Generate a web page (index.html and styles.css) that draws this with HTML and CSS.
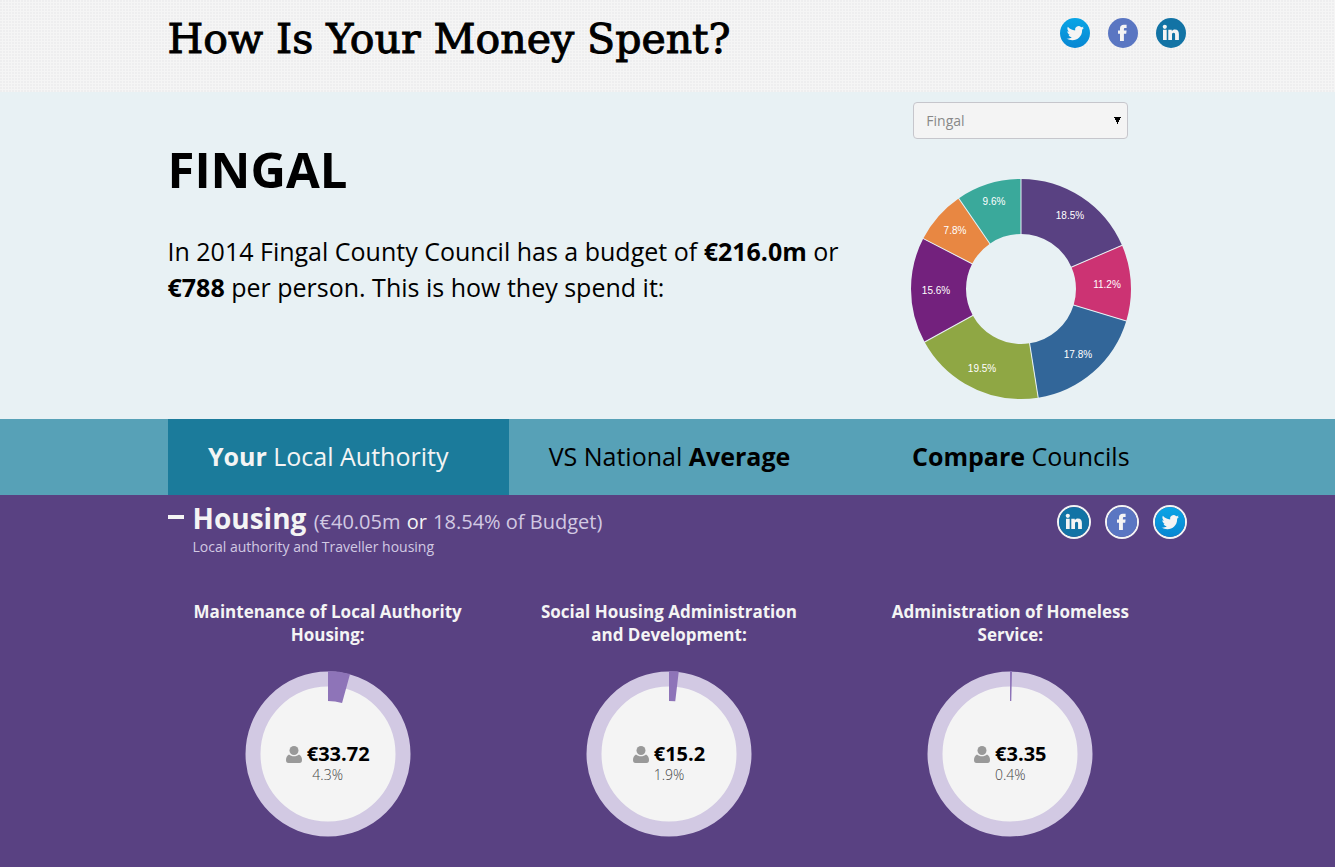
FILE: index.html
```html
<!DOCTYPE html>
<html lang="en">
<head>
<meta charset="utf-8">
<title>How Is Your Money Spent?</title>
<link rel="stylesheet" href="styles.css">
</head>
<body>
<svg class="defs" aria-hidden="true">
  <defs>
    <linearGradient id="tw" x1="0" y1="0" x2="0" y2="1"><stop offset="0" stop-color="#0aa5e6"/><stop offset="1" stop-color="#0786d2"/></linearGradient>
    <symbol id="twitter" viewBox="0 0 30 30">
      <circle cx="15" cy="15" r="15" fill="url(#tw)"/>
      <path fill="#f4f4f4" transform="translate(15 15) scale(1.080) translate(-15.200 -15)" d="M23.5 10.2c-.6.3-1.200.4-1.900.5.7-.4 1.200-1 1.400-1.800-.6.4-1.300.6-2.100.8a3.300 3.300 0 0 0-5.600 3c-2.700-.1-5.100-1.400-6.700-3.400-.9 1.500-.4 3.400 1 4.400-.5 0-1-.2-1.500-.4 0 1.600 1.100 2.900 2.600 3.200-.5.1-1 .2-1.500.1.4 1.300 1.600 2.200 3 2.300-1.400 1.100-3 1.500-4.800 1.300 6.500 4 14.400 0 14.400-7.700v-.6c.7-.5 1.200-1 1.700-1.700z"/>
    </symbol>
    <symbol id="facebook" viewBox="0 0 30 30">
      <circle cx="15" cy="15" r="15" fill="#5a76c2"/>
      <path fill="#f4f4f4" d="M12 23v-7.300H10v-3.200h2v-2C12 8 13.500 6.800 15.800 6.800H18.600v3.200h-1.500c-.9 0-1.200.4-1.200 1.200v1.300h2.700l-.4 3.200h-2.300V23z"/>
    </symbol>
    <symbol id="linkedin" viewBox="0 0 30 30">
      <circle cx="15" cy="15" r="15" fill="#1273a5"/>
      <path fill="#f4f4f4" d="M7 11.800h3.700V22H7zM12.300 11.800h3.500v1.400c.6-1 1.700-1.700 3.100-1.700 2.900 0 4 1.700 4 4.700V22h-3.800v-5c0-1.300-.3-2.200-1.500-2.200s-1.600.9-1.600 2.200v5h-3.700z"/>
      <circle cx="8.800" cy="8.800" r="2.100" fill="#f4f4f4"/>
    </symbol>
    <symbol id="person" viewBox="0 0 16 17">
      <path fill="#999" d="M3 8.500c1.300 1.200 3 1.800 5 1.800s3.700-.6 5-1.800c2 .9 3 3 3 5.500 0 2-.8 3-2.500 3h-11C.8 17 0 16 0 14c0-2.500 1-4.600 3-5.500z"/>
      <circle cx="8" cy="4.500" r="4.500" fill="#999"/>
    </symbol>
  </defs>
</svg>

<header class="header">
  <div class="container header-row">
    <h1 class="site-title">How Is Your Money Spent?</h1>
    <nav class="social" aria-label="Share">
      <a href="#" aria-label="Twitter"><svg class="icon"><use href="#twitter"/></svg></a>
      <a href="#" aria-label="Facebook"><svg class="icon"><use href="#facebook"/></svg></a>
      <a href="#" aria-label="LinkedIn"><svg class="icon"><use href="#linkedin"/></svg></a>
    </nav>
  </div>
</header>

<section class="hero">
  <div class="container columns">
    <div class="intro">
      <h2 class="council">FINGAL</h2>
      <p class="lead">In 2014 Fingal County Council has a budget of <b>€216.0m</b> or <b>€788</b> per person. This is how they spend it:</p>
    </div>
    <div class="overview">
      <select class="picker" aria-label="Council"><option>Fingal</option></select>
      <svg class="pie" viewBox="-110 -110 220 220" role="img" aria-label="Budget by category">
        <g class="slices" transform="rotate(-90)">
          <circle r="82.5" pathLength="100" stroke="#594182" stroke-dasharray="18.5 81.5"/>
          <circle r="82.5" pathLength="100" stroke="#cc3373" stroke-dasharray="11.2 88.8" stroke-dashoffset="-18.5"/>
          <circle r="82.5" pathLength="100" stroke="#326699" stroke-dasharray="17.8 82.2" stroke-dashoffset="-29.7"/>
          <circle r="82.5" pathLength="100" stroke="#8fa744" stroke-dasharray="19.5 80.5" stroke-dashoffset="-47.5"/>
          <circle r="82.5" pathLength="100" stroke="#73217d" stroke-dasharray="15.6 84.4" stroke-dashoffset="-67"/>
          <circle r="82.5" pathLength="100" stroke="#e88742" stroke-dasharray="7.8 92.2" stroke-dashoffset="-82.6"/>
          <circle r="82.5" pathLength="100" stroke="#3aa99b" stroke-dasharray="9.6 90.4" stroke-dashoffset="-90.4"/>
        </g>
        <g class="dividers">
          <path d="M0-54V-111"/>
          <path d="M0-54V-111" transform="rotate(66.6)"/>
          <path d="M0-54V-111" transform="rotate(106.9)"/>
          <path d="M0-54V-111" transform="rotate(171)"/>
          <path d="M0-54V-111" transform="rotate(241.2)"/>
          <path d="M0-54V-111" transform="rotate(297.3)"/>
          <path d="M0-54V-111" transform="rotate(325.500)"/>
        </g>
        <g class="pie-labels">
          <text x="49" y="-70">18.5%</text>
          <text x="86" y="-1">11.2%</text>
          <text x="57" y="69">17.8%</text>
          <text x="-39" y="83">19.5%</text>
          <text x="-85" y="5">15.6%</text>
          <text x="-66" y="-55">7.8%</text>
          <text x="-27" y="-84">9.6%</text>
        </g>
      </svg>
    </div>
  </div>
</section>

<nav class="tabs">
  <div class="container columns">
    <a class="tab active" href="#"><span><b>Your</b> Local Authority</span></a>
    <a class="tab" href="#"><span>VS National <b>Average</b></span></a>
    <a class="tab tab-last" href="#"><span><b>Compare</b> Councils</span></a>
  </div>
</nav>

<main class="housing">
  <div class="container">
    <div class="category">
      <button class="toggle" aria-label="Collapse Housing"></button>
      <div class="category-text">
        <h2 class="category-title">Housing <span class="share">(€40.05m <span class="or">or</span> 18.54% of Budget)</span></h2>
        <p class="category-note">Local authority and Traveller housing</p>
      </div>
      <nav class="social outlined" aria-label="Share Housing">
        <a href="#" aria-label="LinkedIn"><svg class="icon"><use href="#linkedin"/></svg></a>
        <a href="#" aria-label="Facebook"><svg class="icon"><use href="#facebook"/></svg></a>
        <a href="#" aria-label="Twitter"><svg class="icon"><use href="#twitter"/></svg></a>
      </nav>
    </div>
    <div class="columns">
      <section class="item">
        <h3 class="item-title">Maintenance of Local Authority Housing:</h3>
        <div class="dial">
          <svg class="ring" viewBox="-83 -83 166 166" aria-hidden="true"><circle class="track" r="75"/><circle class="wedge" r="68" pathLength="100" stroke-dasharray="4.3 95.7" transform="rotate(-90)"/></svg>
          <div class="figures"><span class="amount"><svg class="person"><use href="#person"/></svg>€33.72</span><span class="percent">4.3%</span></div>
        </div>
      </section>
      <section class="item">
        <h3 class="item-title">Social Housing Administration and Development:</h3>
        <div class="dial">
          <svg class="ring" viewBox="-83 -83 166 166" aria-hidden="true"><circle class="track" r="75"/><circle class="wedge" r="68" pathLength="100" stroke-dasharray="1.9 98.1" transform="rotate(-90)"/></svg>
          <div class="figures"><span class="amount"><svg class="person"><use href="#person"/></svg>€15.2</span><span class="percent">1.9%</span></div>
        </div>
      </section>
      <section class="item">
        <h3 class="item-title">Administration of Homeless Service:</h3>
        <div class="dial">
          <svg class="ring" viewBox="-83 -83 166 166" aria-hidden="true"><circle class="track" r="75"/><circle class="wedge" r="68" pathLength="100" stroke-dasharray="0.4 99.6" transform="rotate(-90)"/></svg>
          <div class="figures"><span class="amount"><svg class="person"><use href="#person"/></svg>€3.35</span><span class="percent">0.4%</span></div>
        </div>
      </section>
    </div>
  </div>
</main>
</body>
</html>
```
FILE: styles.css
```css
* { box-sizing: border-box; }
body {
  margin: 0;
  min-height: 100vh;
  display: flex;
  flex-direction: column;
  background: #594182;
  color: #000;
  font-family: "Open Sans", sans-serif;
}
h1, h2, h3, p { margin: 0; }
a { color: inherit; text-decoration: none; }
.defs { position: absolute; width: 0; height: 0; }
.container {
  width: 100%;
  max-width: 1048px;
  margin: 0 auto;
  padding-left: 24px;
}
.columns { display: grid; grid-template-columns: repeat(3, 1fr); }

.header {
  background: radial-gradient(circle at 1px 1px, #eeeeef 1px, transparent 1px) 0 0 / 3px 3px #f5f5f5;
}
.header-row {
  display: flex;
  justify-content: space-between;
  align-items: flex-start;
  padding: 11px 6px 25px 24px;
}
.site-title {
  font: 400 41px/56px "DejaVu Serif", serif;
  -webkit-text-stroke: 1px #000;
}
.social { display: flex; gap: 18px; padding-top: 7px; }
.social a { display: block; border-radius: 50%; }
.icon { display: block; width: 30px; height: 30px; }

.hero { background: #e8f1f4; }
.intro { grid-column: span 2; padding-top: 44px; }
.council { font-size: 49px; line-height: 66px; font-weight: 700; }
.lead { font-size: 25px; line-height: 36px; padding-top: 31px; }
.overview {
  display: flex;
  flex-direction: column;
  align-items: center;
  padding: 10px 0 20px;
}
.picker {
  appearance: none;
  width: 215px;
  height: 37px;
  padding: 0 12px;
  border: 1px solid #c6c6cc;
  border-radius: 4px;
  color: #888;
  font: 14px "Open Sans", sans-serif;
  background: conic-gradient(from -27deg at 50% 100%, #000 54deg, transparent 0) right 6px center / 7px 7px no-repeat #f4f4f4;
}
.pie { width: 220px; height: 220px; margin-top: 40px; }
.slices circle { fill: none; stroke-width: 55; }
.dividers path { stroke: #e8f1f4; stroke-width: 1; }
.pie-labels text {
  fill: #fff;
  font: 10px "Liberation Sans", sans-serif;
  text-anchor: middle;
}

.tabs { background: #57a1b7; }
.tab {
  padding: 19px 20px 21px 0;
  font-size: 25px;
  line-height: 36px;
  text-align: center;
}
.tab.active { background: #1b7b9b; color: #f4f4f4; }
.tab-last { padding-right: 0; }

.housing { flex: 1; color: #f4f4f4; padding-bottom: 28px; }
.category { display: flex; align-items: flex-start; padding-right: 5px; }
.toggle {
  width: 16px;
  height: 4px;
  margin: 20px 9px 0 0;
  padding: 0;
  border: 0;
  background: #f4f4f4;
}
.category-text { flex: 1; padding-top: 4px; }
.category-title { font-size: 28px; line-height: 38px; font-weight: 700; }
.share { font-size: 20px; font-weight: 400; color: #d2c9e3; }
.or { color: #f4f4f4; padding: 0 1px; }
.category-note { font-size: 14px; line-height: 16px; color: #d2c9e3; margin-top: -2px; }
.outlined { gap: 14px; padding-top: 10px; }
.outlined a { border: 2px solid #f4f4f4; }

.item { padding: 45px 21px 0 0; text-align: center; }
.item-title {
  width: 280px;
  margin: 0 auto;
  font-size: 17px;
  line-height: 23px;
  font-weight: 700;
}
.dial { display: grid; width: 166px; margin: 25px auto 0; }
.dial > * { grid-area: 1 / 1; }
.ring { width: 166px; height: 166px; }
.track { fill: #f4f4f4; stroke: #d2c9e3; stroke-width: 15; }
.wedge { fill: none; stroke: #8e74b8; stroke-width: 30; }
.figures {
  display: flex;
  flex-direction: column;
  align-items: center;
  padding-top: 70px;
}
.amount {
  display: flex;
  align-items: center;
  gap: 5px;
  color: #000;
  font-size: 20px;
  line-height: 26px;
  font-weight: 700;
}
.person { width: 16px; height: 17px; }
.percent { color: #444; font-size: 14px; line-height: 16px; font-weight: 300; }
```
